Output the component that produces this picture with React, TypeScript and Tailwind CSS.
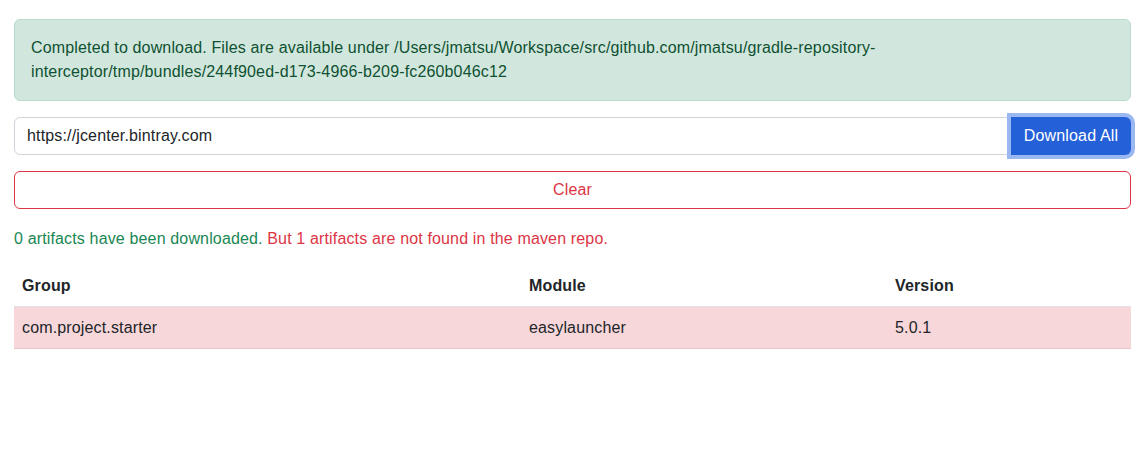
import React, { useState } from 'react';

const rows = [{ group: 'com.project.starter', module: 'easylauncher', version: '5.0.1' }];

export default function App() {
  const [url, setUrl] = useState('https://jcenter.bintray.com');

  return (
    <div className="w-full min-h-screen bg-white px-[14px] pt-[19px] font-['Liberation_Sans',Arial,sans-serif] text-[16px] leading-6 tracking-[0.15px] text-[#212529]">
      <div className="rounded-[6px] border border-[#badbcc] bg-[#d1e7dd] px-4 py-4 text-[#0f5132]">
        Completed to download. Files are available under /Users/jmatsu/Workspace/src/github.com/jmatsu/gradle-repository-interceptor/tmp/bundles/244f90ed-d173-4966-b209-fc260b046c12
      </div>

      <div className="mt-4 flex items-center">
        <input
          value={url}
          onChange={(e) => setUrl(e.target.value)}
          className="h-[38px] flex-1 rounded-l-[6px] border border-[#ced4da] bg-white px-3 text-[16px] tracking-[0.15px] text-[#212529] outline-none"
        />
        <button className="ml-[3px] h-[38px] w-[120px] rounded-r-[6px] bg-[#2460d8] text-[16px] text-white ring-4 ring-[#9ab7f2]">
          Download All
        </button>
      </div>

      <button className="mt-4 h-[38px] w-full rounded-[6px] border border-[#dc3545] bg-white text-[16px] text-[#dc3545]">
        Clear
      </button>

      <p className="mt-[18px]">
        <span className="text-[#198754]">0 artifacts have been downloaded.</span>{' '}
        <span className="text-[#dc3545]">But 1 artifacts are not found in the maven repo.</span>
      </p>

      <table className="mt-[15px] w-full border-collapse text-left">
        <thead>
          <tr className="border-b border-[#dee2e6]">
            <th className="w-[507px] px-2 py-2 font-bold">Group</th>
            <th className="w-[366px] px-2 py-2 font-bold">Module</th>
            <th className="px-2 py-2 font-bold">Version</th>
          </tr>
        </thead>
        <tbody>
          {rows.map((r) => (
            <tr key={r.group} className="border-b border-[#e8c5c9] bg-[#f8d7da]">
              <td className="px-2 py-[8.5px]">{r.group}</td>
              <td className="px-2 py-[8.5px]">{r.module}</td>
              <td className="px-2 py-[8.5px]">{r.version}</td>
            </tr>
          ))}
        </tbody>
      </table>
    </div>
  );
}
